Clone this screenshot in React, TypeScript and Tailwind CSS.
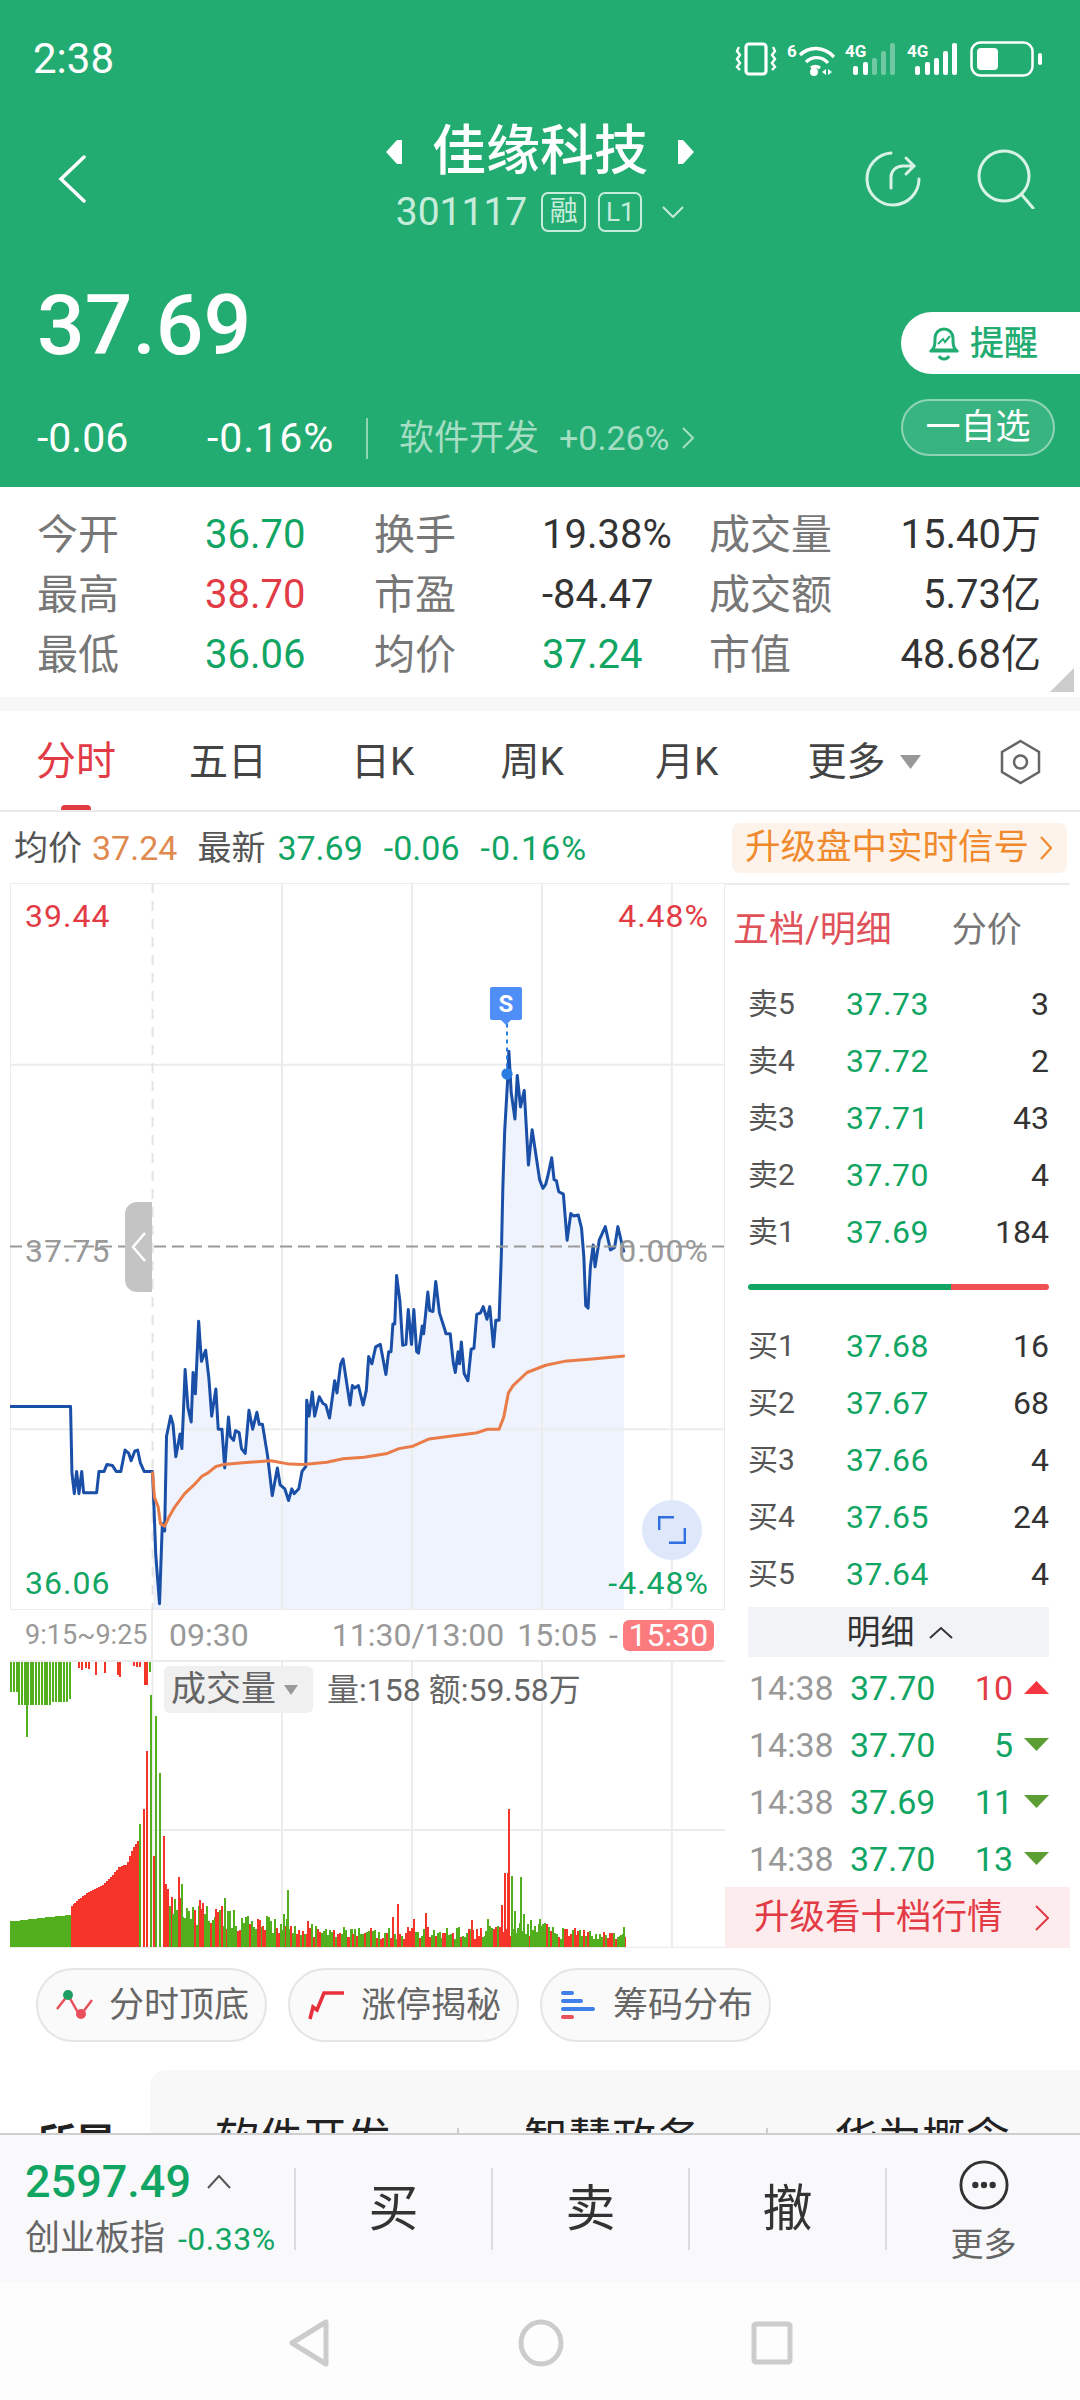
const PRICE_LINE =
  "20,1088 150,1088 153,1225 158,1268 163,1222 168,1268 174,1222 178,1266 206,1266 211,1222 222,1222 228,1208 240,1210 248,1222 258,1222 267,1178 275,1185 280,1200 288,1180 294,1178 300,1205 308,1222 326,1222 328,1270 333,1395 341,1495 347,1330 352,1345 356,1150 365,1108 370,1125 376,1192 385,1145 389,1175 396,1012 402,1090 409,1120 413,1018 418,1062 425,912 431,995 440,972 447,1030 453,1108 462,1052 467,1135 475,1135 481,1215 489,1110 493,1150 500,1158 504,1138 512,1142 517,1175 525,1185 533,1096 541,1135 550,1100 555,1125 562,1125 573,1190 583,1272 594,1215 600,1250 610,1258 618,1282 625,1258 630,1268 640,1258 647,1222 655,1212 657,1075 662,1108 669,1058 674,1108 684,1068 692,1082 698,1085 706,1112 717,1035 722,1060 730,1000 735,990 750,1085 755,1045 760,1050 768,1045 778,1085 785,1055 790,985 797,1000 805,965 815,960 827,1022 833,975 838,975 842,918 846,918 850,818 857,870 863,962 870,960 875,888 882,960 887,888 893,975 897,978 905,922 908,938 917,852 921,890 928,892 934,830 942,895 952,925 956,938 965,938 972,1000 976,1018 982,975 985,1000 989,955 995,1020 1003,1035 1010,970 1016,968 1022,898 1030,895 1036,882 1044,908 1050,882 1058,965 1063,910 1070,910 1075,770 1078,640 1082,520 1088,420 1091,355 1096,440 1104,495 1109,405 1116,470 1124,436 1133,590 1141,517 1150,575 1157,620 1164,638 1170,630 1174,615 1183,575 1188,620 1193,622 1198,645 1208,650 1216,745 1224,690 1230,695 1240,693 1247,720 1252,780 1256,880 1261,885 1266,800 1272,755 1276,800 1285,745 1298,717 1309,765 1318,760 1325,717 1338,770";

const AVG_LINE =
  "326,1222 330,1275 338,1295 343,1330 352,1335 362,1315 372,1298 395,1268 415,1250 432,1232 445,1225 462,1212 478,1208 520,1204 580,1200 620,1207 650,1208 700,1203 735,1196 780,1193 830,1185 855,1175 885,1170 920,1155 960,1150 1020,1143 1045,1135 1070,1135 1080,1110 1090,1060 1100,1045 1130,1018 1170,1003 1210,995 1270,990 1340,984";

const AREA = `${PRICE_LINE.slice(PRICE_LINE.indexOf("326,1222"))} 1338,1508 328,1508`;

const GREEN = "#52b01f";
const RED = "#f5352a";

const hash = (n: number) => {
  const v = Math.sin(n * 12.9898) * 43758.5453;
  return v - Math.floor(v);
};

const lerp = (pts: number[][], x: number) => {
  for (let i = 1; i < pts.length; i++) {
    if (x <= pts[i][0]) {
      const [x0, y0] = pts[i - 1];
      const [x1, y1] = pts[i];
      return y0 + ((y1 - y0) * (x - x0)) / (x1 - x0);
    }
  }
  return pts[pts.length - 1][1];
};

const SPIKES: [number, number, string][] = [
  [297, 370, GREEN], [305, 415, RED], [312, 590, RED], [320, 760, GREEN], [326, 275, RED], [332, 695, GREEN],
  [340, 525, GREEN], [348, 335, RED], [380, 210, RED], [388, 190, GREEN], [425, 143, RED], [460, 115, RED],
  [472, 125, RED], [480, 147, GREEN], [614, 173, GREEN], [606, 100, GREEN], [657, 80, RED], [850, 130, RED],
  [840, 90, RED], [885, 85, RED], [910, 102, RED], [1010, 82, RED], [1045, 85, GREEN], [1074, 128, RED],
  [1080, 225, RED], [1086, 225, RED], [1090, 417, RED], [1096, 215, GREEN], [1102, 110, GREEN], [1114, 213, GREEN],
  [1122, 100, GREEN], [1156, 85, GREEN], [1336, 60, GREEN],
];

const buildBars = () => {
  const bars: { x: number; h: number; c: string }[] = [];
  for (let x = 20; x < 148; x += 4.2) bars.push({ x, h: 78 + ((x - 20) / 128) * 20, c: GREEN });
  const ramp = [[150, 125], [185, 165], [220, 190], [235, 212], [250, 240], [270, 250], [280, 290], [292, 320]];
  for (let x = 150; x < 294; x += 4.2) bars.push({ x, h: lerp(ramp, x), c: RED });
  const tail = [[352, 170], [400, 120], [450, 95], [600, 70], [700, 55], [800, 45], [1000, 50], [1060, 50], [1150, 65], [1200, 48], [1340, 32]];
  for (let x = 352; x < 1340; x += 4.2) {
    const r = hash(x);
    const h = lerp(tail, x) * (0.5 + r * 0.8);
    const green = x > 1090 && x < 1170 ? r > 0.15 : hash(x + 7) > 0.5;
    bars.push({ x, h, c: green ? GREEN : RED });
  }
  SPIKES.forEach(([x, h, c]) => bars.push({ x, h, c }));
  return bars;
};

const BARS = buildBars();

const buildTopBars = () => {
  const bars: { x: number; h: number; c: string }[] = [];
  for (let x = 20; x < 150; x += 6) {
    const h = x < 36 ? 90 : x < 110 ? 128 : x < 144 ? 120 : 112;
    bars.push({ x, h, c: GREEN });
  }
  bars.push({ x: 54, h: 226, c: GREEN });
  [[165, 17], [172, 24], [180, 17], [187, 20], [202, 40], [221, 34], [249, 40], [255, 46], [283, 12], [291, 15], [298, 14], [307, 68], [312, 68], [318, 30]].forEach(
    ([x, h]) => bars.push({ x, h, c: x === 318 ? GREEN : RED }),
  );
  return bars;
};

const TOP_BARS = buildTopBars();

const SELL = [
  ["卖5", "37.73", "3"],
  ["卖4", "37.72", "2"],
  ["卖3", "37.71", "43"],
  ["卖2", "37.70", "4"],
  ["卖1", "37.69", "184"],
];
const BUY = [
  ["买1", "37.68", "16"],
  ["买2", "37.67", "68"],
  ["买3", "37.66", "4"],
  ["买4", "37.65", "24"],
  ["买5", "37.64", "4"],
];
const TICKS = [
  ["37.70", "10", true],
  ["37.70", "5", false],
  ["37.69", "11", false],
  ["37.70", "13", false],
] as const;

function StatusIcons() {
  return (
    <div className="flex items-center pr-[38px]">
      <svg width="42" height="34" viewBox="0 0 42 34" fill="none" stroke="white">
        <rect x="11" y="2" width="20" height="30" rx="3" strokeWidth="3.2" />
        <path d="M4 5l-2 4 3 4-3 4 3 4-3 4 3 3M38 5l2 4-3 4 3 4-3 4 3 4-3 3" strokeWidth="2.4" />
      </svg>
      <svg width="48" height="34" viewBox="0 0 48 34" fill="none" stroke="white" className="ml-[10px]">
        <text x="0" y="15" fontSize="17" fontWeight="700" fill="white" stroke="none" fontFamily="Roboto">6</text>
        <path d="M13 13c9-9 24-9 34 2M19 20c6-6 16-6 22 1M24 26c3-2 6-2 9 0" strokeWidth="3.4" />
        <circle cx="27" cy="30" r="4" fill="white" stroke="none" />
        <path d="M39 27l-4 3 4 3zM41 27l4 3-4 3z" fill="white" stroke="none" />
      </svg>
      <svg width="50" height="34" viewBox="0 0 50 34" className="ml-[10px]">
        <text x="0" y="15" fontSize="17" fontWeight="700" fill="white" fontFamily="Roboto">4G</text>
        <rect x="8" y="24" width="5" height="9" rx="2" fill="white" />
        <rect x="18" y="20" width="5" height="13" rx="2" fill="white" />
        <rect x="27" y="16" width="5" height="17" rx="2" fill="white" fillOpacity="0.35" />
        <rect x="36" y="9" width="5" height="24" rx="2" fill="white" fillOpacity="0.35" />
        <rect x="45" y="1" width="5" height="32" rx="2" fill="white" fillOpacity="0.35" />
      </svg>
      <svg width="50" height="34" viewBox="0 0 50 34" className="ml-[12px]">
        <text x="0" y="15" fontSize="17" fontWeight="700" fill="white" fontFamily="Roboto">4G</text>
        <rect x="8" y="24" width="5" height="9" rx="2" fill="white" />
        <rect x="18" y="20" width="5" height="13" rx="2" fill="white" />
        <rect x="27" y="16" width="5" height="17" rx="2" fill="white" />
        <rect x="36" y="9" width="5" height="24" rx="2" fill="white" />
        <rect x="45" y="1" width="5" height="32" rx="2" fill="white" />
      </svg>
      <svg width="72" height="36" viewBox="0 0 72 36" className="ml-[13px]">
        <rect x="1.5" y="1.5" width="61" height="33" rx="9" fill="none" stroke="white" strokeWidth="2.5" />
        <rect x="7" y="7" width="21" height="22" rx="4" fill="white" />
        <rect x="68" y="12" width="4" height="12" rx="2" fill="white" />
      </svg>
    </div>
  );
}

function Header() {
  return (
    <header className="h-[487px] shrink-0 bg-[#23ac72] text-white">
      <div className="flex h-[118px] items-center justify-between pl-[33px]">
        <span className="text-[42px] leading-none">2:38</span>
        <StatusIcons />
      </div>

      <div className="grid h-[122px] grid-cols-[1fr_auto_1fr] items-center">
        <div className="pl-[58px]">
          <svg width="28" height="48" viewBox="0 0 28 48" fill="none" stroke="white" strokeWidth="3.5" strokeLinecap="round">
            <path d="M26 2L3 24l23 22" />
          </svg>
        </div>
        <div className="flex h-full flex-col items-center pt-[7px]">
          <div className="flex h-[53px] items-center gap-[29px]">
            <svg width="19" height="26" viewBox="0 0 19 26" fill="white"><path d="M13 1L2 13l11 12h5V1z" /></svg>
            <span className="text-[54px] font-medium leading-none">佳缘科技</span>
            <svg width="19" height="26" viewBox="0 0 19 26" fill="white"><path d="M6 1l11 12L6 25H1V1z" /></svg>
          </div>
          <div className="mt-[14px] flex h-[40px] items-center text-[#c8ecdb]">
            <span className="text-[39px] leading-none">301117</span>
            <span className="ml-[14px] flex h-[40px] w-[45px] items-center justify-center rounded-[7px] border-2 border-[#c8ecdb] text-[28px] leading-none">融</span>
            <span className="ml-[12px] flex h-[40px] w-[44px] items-center justify-center rounded-[7px] border-2 border-[#c8ecdb] text-[26px] leading-none">L1</span>
            <svg width="22" height="12" viewBox="0 0 22 12" fill="none" stroke="#c8ecdb" strokeWidth="2" className="ml-[20px]">
              <path d="M1 1l10 10L21 1" />
            </svg>
          </div>
        </div>
        <div className="flex items-center justify-end gap-[55px] pr-[45px]">
          <svg width="58" height="58" viewBox="0 0 58 58" fill="none" stroke="#d8f2e5" strokeWidth="3" strokeLinecap="round">
            <path d="M27 3A26 26 0 1 0 55 29" />
            <path d="M27 38V27c0-6 5-11 12-11h10M42 8l8 8-8 8" />
          </svg>
          <svg width="58" height="60" viewBox="0 0 58 60" fill="none" stroke="#d8f2e5" strokeWidth="3" strokeLinecap="round">
            <ellipse cx="27" cy="27" rx="25" ry="25" />
            <path d="M45 46l11 13" />
          </svg>
        </div>
      </div>

      <div className="flex justify-between">
        <div className="pl-[37px]">
          <div className="mt-[54px] text-[84px] font-medium leading-[64px]">37.69</div>
          <div className="mt-[59px] flex h-[42px] items-center">
            <span className="w-[170px] text-[41px] leading-none">-0.06</span>
            <span className="w-[159px] text-[41px] leading-none tracking-[1px]">-0.16%</span>
            <span className="h-[41px] w-[2px] bg-[#8fd4b5]" />
            <span className="ml-[31px] text-[35px] leading-none text-[#a6dec4]">软件开发</span>
            <span className="ml-[20px] text-[34px] leading-none text-[#a6dec4]">+0.26%</span>
            <svg width="12" height="22" viewBox="0 0 12 22" fill="none" stroke="#a6dec4" strokeWidth="2" className="ml-[12px]">
              <path d="M1 1l10 10L1 21" />
            </svg>
          </div>
        </div>
        <div className="w-[179px]">
          <div className="mt-[72px] flex h-[62px] items-center rounded-l-[31px] bg-white pl-[27px] text-[#23ac72]">
            <svg width="32" height="36" viewBox="0 0 32 36" fill="none" stroke="#23ac72" strokeWidth="3">
              <path d="M4 25c3-3 3-6 3-12a9 9 0 0 1 18 0c0 6 0 9 3 12zM2 26h28M11 31c2 4 8 4 10 0" />
              <path d="M10 19l5-5 2 3 5-6" strokeWidth="2" />
            </svg>
            <span className="ml-[10px] text-[34px] font-medium leading-none">提醒</span>
          </div>
          <div className="mt-[25px] flex h-[57px] w-[154px] items-center justify-center rounded-[29px] border-2 border-[#8fd4b5] bg-[#37b480] text-[35px] leading-none">
            一自选
          </div>
        </div>
      </div>
    </header>
  );
}

function Stat({ label, value, color }: { label: string; value: string; color: string }) {
  return (
    <>
      <span className="text-[41px] text-[#777]">{label}</span>
      <span className={color}>{value}</span>
    </>
  );
}

function Stats() {
  return (
    <section className="relative h-[210px] shrink-0 bg-white">
      <div className="grid grid-cols-[168px_169px_168px_167px_150px_182px] grid-rows-[60px_60px_60px] items-center pl-[37px] pt-[18px] text-[40px] leading-none">
        <Stat label="今开" value="36.70" color="text-[#11a564]" />
        <Stat label="换手" value="19.38%" color="text-[#333]" />
        <span className="text-[41px] text-[#777]">成交量</span>
        <span className="text-right text-[#333]">15.40万</span>
        <Stat label="最高" value="38.70" color="text-[#e33b45]" />
        <Stat label="市盈" value="-84.47" color="text-[#333]" />
        <span className="text-[41px] text-[#777]">成交额</span>
        <span className="text-right text-[#333]">5.73亿</span>
        <Stat label="最低" value="36.06" color="text-[#11a564]" />
        <Stat label="均价" value="37.24" color="text-[#11a564]" />
        <span className="text-[41px] text-[#777]">市值</span>
        <span className="text-right text-[#333]">48.68亿</span>
      </div>
      <svg width="24" height="24" viewBox="0 0 24 24" className="absolute left-[1050px] top-[181px]">
        <path d="M24 0v24H0z" fill="#ccc" />
      </svg>
    </section>
  );
}

function Tabs() {
  return (
    <div className="relative flex h-[101px] shrink-0 items-center border-b-2 border-[#e8e8e8] bg-white pt-[3px] text-[39px] leading-none text-[#444]">
      <span className="ml-[36px] text-[40px] text-[#e33b45]">分时</span>
      <span className="ml-[73px]">五日</span>
      <span className="ml-[84px]">日K</span>
      <span className="ml-[86px]">周K</span>
      <span className="ml-[91px]">月K</span>
      <span className="ml-[89px]">更多</span>
      <svg width="21" height="14" viewBox="0 0 21 14" className="ml-[15px]"><path d="M0 0h21L10.5 14z" fill="#999" /></svg>
      <svg width="41" height="46" viewBox="0 0 41 46" fill="none" stroke="#666" strokeWidth="2.5" className="ml-[79px]">
        <path d="M20.5 2L39 13v20L20.5 44 2 33V13z" />
        <circle cx="20.5" cy="23" r="6.5" />
      </svg>
      <span className="absolute bottom-0 left-[61px] h-[5px] w-[30px] rounded-t-sm bg-[#e33b45]" />
    </div>
  );
}

function InfoLine() {
  return (
    <div className="flex h-[71px] shrink-0 items-center bg-white pl-[14px] text-[34px] leading-none">
      <span className="text-[#555]">均价</span>
      <span className="ml-[10px] text-[#e08a4f]">37.24</span>
      <span className="ml-[20px] text-[#555]">最新</span>
      <span className="ml-[12px] text-[#11a564]">37.69</span>
      <span className="ml-[21px] text-[#11a564]">-0.06</span>
      <span className="ml-[21px] tracking-[1px] text-[#11a564]">-0.16%</span>
      <div className="ml-auto mr-[13px] flex h-[50px] w-[335px] items-center rounded-lg bg-[#fdf3ea] pl-[13px] text-[35.5px] text-[#f08a2c]">
        升级盘中实时信号
        <svg width="12" height="24" viewBox="0 0 12 24" fill="none" stroke="#f08a2c" strokeWidth="2.2" className="ml-[11px]">
          <path d="M1 1l10 11L1 23" />
        </svg>
      </div>
    </div>
  );
}

function PriceChart() {
  return (
    <div className="relative h-[727px]">
      <svg className="absolute inset-0 h-full w-full" viewBox="20 8 1535 1500" preserveAspectRatio="none">
        <polygon points={AREA} fill="#eef3fd" />
        <g stroke="#ececec" strokeWidth="2" fill="none" vectorEffect="non-scaling-stroke">
          <rect x="20" y="8" width="1535" height="1500" vectorEffect="non-scaling-stroke" />
          {[604, 883, 1162, 1441].map((x) => (
            <line key={x} x1={x} x2={x} y1="8" y2="1508" vectorEffect="non-scaling-stroke" />
          ))}
          {[383, 1135].map((y) => (
            <line key={y} x1="20" x2="1555" y1={y} y2={y} vectorEffect="non-scaling-stroke" />
          ))}
        </g>
        <line x1="326" x2="326" y1="8" y2="1508" stroke="#e4e4e4" strokeWidth="2" strokeDasharray="10 8" vectorEffect="non-scaling-stroke" />
        <polyline points={PRICE_LINE} fill="none" stroke="#1a4fa8" strokeWidth="3" strokeLinejoin="round" vectorEffect="non-scaling-stroke" />
        <polyline points={AVG_LINE} fill="none" stroke="#e97c48" strokeWidth="3" strokeLinejoin="round" vectorEffect="non-scaling-stroke" />
        <line x1="20" x2="1555" y1="758" y2="758" stroke="#9a9a9a" strokeWidth="2" strokeDasharray="12 6" vectorEffect="non-scaling-stroke" />
        <line x1="1087" x2="1087" y1="298" y2="400" stroke="#2a7de1" strokeWidth="2" strokeDasharray="4 4" vectorEffect="non-scaling-stroke" />
        <ellipse cx="1087" cy="402" rx="12" ry="12" fill="#2a7de1" />
      </svg>

      <span className="absolute left-[15px] top-[17px] text-[32px] leading-none tracking-[1px] text-[#e33b45]">39.44</span>
      <span className="absolute right-[16px] top-[17px] text-[32px] leading-none tracking-[1px] text-[#e33b45]">4.48%</span>
      <span className="absolute left-[15px] top-[352px] text-[32px] leading-none tracking-[1px] text-[#999]">37.75</span>
      <span className="absolute right-[16px] top-[352px] text-[32px] leading-none tracking-[1px] text-[#999]">0.00%</span>
      <span className="absolute left-[15px] top-[684px] text-[32px] leading-none tracking-[1px] text-[#11a564]">36.06</span>
      <span className="absolute right-[16px] top-[684px] text-[32px] leading-none tracking-[1px] text-[#11a564]">-4.48%</span>

      <div className="absolute left-[115px] top-[319px] flex h-[90px] w-[27px] items-center justify-center rounded-l-xl bg-[#c4c4c4]">
        <svg width="15" height="30" viewBox="0 0 15 30" fill="none" stroke="white" strokeWidth="2.5">
          <path d="M14 1L2 15l12 14" />
        </svg>
      </div>

      <div className="absolute left-[480px] top-[104px] flex h-[33px] w-[32px] items-center justify-center rounded-[2px] bg-[#4f8ef7] text-[24px] font-bold leading-none text-white">
        S
        <span className="absolute -bottom-[5px] left-[11px] size-0 border-x-[5px] border-t-[5px] border-x-transparent border-t-[#4f8ef7]" />
      </div>

      <div className="absolute left-[632px] top-[617px] flex size-[60px] items-center justify-center rounded-full bg-[#dfe8fb]">
        <svg width="28" height="28" viewBox="0 0 28 28" fill="none" stroke="#2f6fe0" strokeWidth="2.8">
          <path d="M1 14V1h15M27 12v15H11" />
        </svg>
      </div>
    </div>
  );
}

function TimeAxis() {
  return (
    <div className="relative flex h-[50px] items-center pl-[15px] text-[32px] leading-none text-[#999]">
      <span className="w-[123px] whitespace-nowrap text-[27px]">9:15~9:25</span>
      <span className="ml-[21px]">09:30</span>
      <span className="ml-[83px]">11:30/13:00</span>
      <span className="ml-[13px]">15:05</span>
      <span className="ml-[12px]">-</span>
      <span className="ml-[5px] flex h-[31px] w-[91px] items-center justify-center rounded-md bg-[#fb7b7e] text-white">15:30</span>
      <span className="absolute left-[141px] top-0 h-full w-[2px] bg-[#ececec]" />
    </div>
  );
}

function VolumeChart() {
  return (
    <div className="relative h-[288px] border-t-2 border-[#ececec]">
      <svg className="absolute inset-0 h-full w-full" viewBox="20 185 1535 860" preserveAspectRatio="none">
        <g stroke="#ececec" strokeWidth="2" vectorEffect="non-scaling-stroke">
          {[326, 604, 883, 1162, 1441].map((x) => (
            <line key={x} x1={x} x2={x} y1="185" y2="1043" vectorEffect="non-scaling-stroke" />
          ))}
          <line x1="326" x2="1555" y1="690" y2="690" vectorEffect="non-scaling-stroke" />
          <line x1="20" x2="1555" y1="1044" y2="1044" vectorEffect="non-scaling-stroke" />
        </g>
        <g shapeRendering="crispEdges">
          {BARS.map((b, i) => (
            <rect key={i} x={b.x} y={1043 - b.h} width="4.3" height={b.h} fill={b.c} />
          ))}
          {TOP_BARS.map((b, i) => (
            <rect key={i} x={b.x} y="185" width="4.3" height={b.h} fill={b.c} />
          ))}
        </g>
      </svg>
      <div className="absolute left-[154px] top-[4px] flex items-center">
        <div className="flex h-[47px] w-[149px] items-center rounded-md bg-[#f0f0f0] pl-[7px] text-[35px] leading-none text-[#666]">
          成交量
          <svg width="14" height="10" viewBox="0 0 14 10" className="ml-[8px]"><path d="M0 0h14L7 10z" fill="#999" /></svg>
        </div>
        <span className="ml-[14px] text-[32px] leading-none text-[#666]">量:158 额:59.58万</span>
      </div>
    </div>
  );
}

function QuoteRow({ row }: { row: string[] }) {
  return (
    <div className="flex h-[57px] items-center leading-none">
      <span className="w-[98px] text-[30px] text-[#555]">{row[0]}</span>
      <span className="w-[90px] text-[32px] tracking-[0.5px] text-[#11a564]">{row[1]}</span>
      <span className="flex-1 text-right text-[32px] text-[#333]">{row[2]}</span>
    </div>
  );
}

function OrderBook() {
  return (
    <aside className="w-[345px] shrink-0 border-t-2 border-[#ececec]">
      <div className="flex h-[90px] items-center pl-[8px] leading-none">
        <span className="text-[36px] text-[#e0525a]">五档/明细</span>
        <span className="ml-[60px] text-[35px] text-[#777]">分价</span>
      </div>
      <div className="pl-[23px] pr-[21px]">
        {SELL.map((r) => (
          <QuoteRow key={r[0]} row={r} />
        ))}
        <div className="mt-[24px] flex h-[6px] overflow-hidden rounded-full">
          <span className="w-[203px] bg-[#11a564]" />
          <span className="flex-1 bg-[#f04f55]" />
        </div>
        <div className="mt-[27px]">
          {BUY.map((r) => (
            <QuoteRow key={r[0]} row={r} />
          ))}
        </div>
        <div className="mt-[5px] flex h-[50px] items-center justify-center gap-[14px] bg-[#f2f3f7] pl-[2px] text-[34px] leading-none text-[#333]">
          明细
          <svg width="24" height="13" viewBox="0 0 24 13" fill="none" stroke="#333" strokeWidth="2"><path d="M1 12L12 2l11 10" /></svg>
        </div>
        <div className="mt-[2px]">
          {TICKS.map((t, i) => (
            <div key={i} className="flex h-[57px] items-center text-[34px] leading-none">
              <span className="w-[102px] pl-[1px] text-[#999]">14:38</span>
              <span className="w-[90px] text-[#11a564]">{t[0]}</span>
              <span className={`flex-1 text-right ${t[2] ? "text-[#e33b45]" : "text-[#11a564]"}`}>{t[1]}</span>
              <svg width="25" height="14" viewBox="0 0 25 14" className="ml-[11px]">
                {t[2] ? <path d="M0 13h25L12.5 0z" fill="#f5353f" /> : <path d="M0 0h25L12.5 13z" fill="#5c9e33" />}
              </svg>
            </div>
          ))}
        </div>
      </div>
      <div className="flex h-[61px] items-center bg-[#fdecee] pl-[29px] text-[35.5px] leading-none text-[#e33b45]">
        升级看十档行情
        <svg width="14" height="26" viewBox="0 0 14 26" fill="none" stroke="#e33b45" strokeWidth="2" className="ml-[32px]">
          <path d="M1 1l12 12L1 25" />
        </svg>
      </div>
    </aside>
  );
}

function Chip({ icon, label }: { icon: React.ReactNode; label: string }) {
  return (
    <div className="flex h-[74px] w-[231px] items-center rounded-[37px] border-2 border-[#e5e5e5] bg-[#fafafa] pl-[18px] text-[35px] leading-none text-[#666]">
      {icon}
      <span className="ml-[16px] whitespace-nowrap">{label}</span>
    </div>
  );
}

function Chips() {
  return (
    <div className="flex h-[122px] shrink-0 gap-[21px] bg-white pl-[36px] pt-[20px]">
      <Chip
        label="分时顶底"
        icon={
          <svg width="37" height="30" viewBox="0 0 37 30">
            <path d="M1 19L12 5l12 21 12-16" fill="none" stroke="#e8505b" strokeWidth="2.4" />
            <circle cx="12" cy="5" r="5" fill="#1f9d62" />
            <circle cx="25" cy="24" r="5" fill="#e8505b" />
          </svg>
        }
      />
      <Chip
        label="涨停揭秘"
        icon={
          <svg width="37" height="30" viewBox="0 0 37 30" fill="none" stroke="#e8303c" strokeWidth="3.6">
            <path d="M2 29l3-12 4 3 7-17h20" />
          </svg>
        }
      />
      <Chip
        label="筹码分布"
        icon={
          <svg width="37" height="30" viewBox="0 0 37 30">
            <rect x="1" y="1" width="13" height="4" rx="2" fill="#3f7fe8" />
            <rect x="1" y="9" width="22" height="4" rx="2" fill="#3f7fe8" />
            <rect x="1" y="17" width="34" height="4" rx="2" fill="#3f7fe8" />
            <rect x="1" y="25" width="13" height="4" rx="2" fill="#e8505b" />
          </svg>
        }
      />
    </div>
  );
}

function Concepts() {
  return (
    <div className="flex h-[63px] shrink-0 overflow-hidden bg-white">
      <div className="w-[150px] shrink-0 pl-[38px] pt-[53px] text-[38px] font-bold leading-none text-[#222]">所属</div>
      <div className="flex flex-1 rounded-tl-2xl bg-[#f8f8f9] pt-[48px] text-[44px] leading-none text-[#222]">
        <span className="ml-[65px] w-[176px] whitespace-nowrap">软件开发</span>
        <span className="ml-[66px] h-[6px] w-[2px] translate-y-[10px] bg-[#ccc]" />
        <span className="ml-[65px] w-[176px] whitespace-nowrap">智慧政务</span>
        <span className="ml-[66px] h-[6px] w-[2px] translate-y-[10px] bg-[#ccc]" />
        <span className="ml-[66px] w-[176px] whitespace-nowrap">华为概念</span>
      </div>
    </div>
  );
}

function TradeBar() {
  return (
    <div className="flex h-[150px] shrink-0 border-t-2 border-[#cfcfcf] bg-[#f9f9fb]">
      <div className="w-[294px] shrink-0 pl-[25px] pt-[24px]">
        <div className="flex items-center">
          <span className="text-[45px] font-medium leading-[46px] text-[#11a564]">2597.49</span>
          <svg width="24" height="14" viewBox="0 0 24 14" fill="none" stroke="#555" strokeWidth="2" className="ml-[16px]">
            <path d="M1 13L12 1l11 12" />
          </svg>
        </div>
        <div className="mt-[16px] flex items-center">
          <span className="text-[35px] leading-none text-[#666]">创业板指</span>
          <span className="ml-[13px] text-[32px] leading-none tracking-[0.5px] text-[#11a564]">-0.33%</span>
        </div>
      </div>
      {["买", "卖", "撤"].map((t) => (
        <div key={t} className="flex w-[197px] shrink-0">
          <span className="my-[33px] w-[2px] bg-[#dcdcdc]" />
          <span className="flex flex-1 items-center justify-center text-[50px] leading-none text-[#333]">{t}</span>
        </div>
      ))}
      <span className="my-[33px] w-[2px] bg-[#dcdcdc]" />
      <div className="flex flex-1 flex-col items-center pt-[25px]">
        <svg width="50" height="50" viewBox="0 0 52 52" fill="none" stroke="#333" strokeWidth="3">
          <circle cx="26" cy="26" r="24" />
          <circle cx="17" cy="26" r="1.8" fill="#333" />
          <circle cx="26" cy="26" r="1.8" fill="#333" />
          <circle cx="35" cy="26" r="1.8" fill="#333" />
        </svg>
        <span className="mt-[18px] text-[33px] leading-none text-[#666]">更多</span>
      </div>
    </div>
  );
}

function NavBar() {
  return (
    <div className="relative flex flex-1 items-start bg-[#fdfdfd] pt-[36px]">
      <svg width="40" height="48" viewBox="0 0 40 48" fill="none" stroke="#ccc" strokeWidth="5" strokeLinejoin="round" className="ml-[289px]">
        <path d="M37 3v42L3 24z" />
      </svg>
      <svg width="46" height="48" viewBox="0 0 46 48" fill="none" stroke="#ccc" strokeWidth="5" className="ml-[189px]">
        <ellipse cx="23" cy="24" rx="20" ry="21" />
      </svg>
      <svg width="42" height="44" viewBox="0 0 42 44" fill="none" stroke="#ccc" strokeWidth="5" className="ml-[187px] mt-[2px]">
        <rect x="3" y="3" width="36" height="38" rx="2" />
      </svg>
    </div>
  );
}

export default function App() {
  return (
    <div className="flex h-[2400px] w-[1080px] flex-col overflow-hidden bg-white font-[Roboto,'Noto_Sans_CJK_SC',sans-serif]">
      <Header />
      <Stats />
      <div className="h-[14px] shrink-0 bg-[#f7f7f7]" />
      <Tabs />
      <InfoLine />
      <div className="flex h-[1065px] shrink-0 bg-white pl-[10px]">
        <div className="w-[715px] shrink-0">
          <PriceChart />
          <TimeAxis />
          <VolumeChart />
        </div>
        <OrderBook />
      </div>
      <Chips />
      <Concepts />
      <TradeBar />
      <NavBar />
    </div>
  );
}
